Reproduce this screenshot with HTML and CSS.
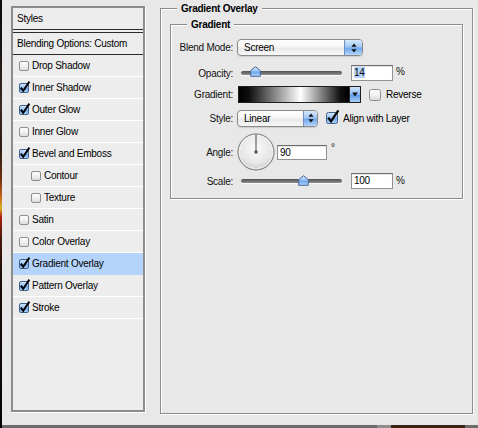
FILE: index.html
```html
<!DOCTYPE html>
<html>
<head>
<meta charset="utf-8">
<title>Layer Style</title>
<link rel="stylesheet" href="styles.css">
</head>
<body>
<svg class="defs" width="0" height="0" aria-hidden="true">
  <defs>
    <linearGradient id="gw" x1="0" y1="0" x2="0" y2="1">
      <stop offset="0" stop-color="#ffffff"/>
      <stop offset="0.5" stop-color="#f1f1f1"/>
      <stop offset="1" stop-color="#d9d9d9"/>
    </linearGradient>
    <linearGradient id="gb" x1="0" y1="0" x2="0" y2="1">
      <stop offset="0" stop-color="#d6e8fc"/>
      <stop offset="0.45" stop-color="#9cc4f3"/>
      <stop offset="0.55" stop-color="#6ea6ec"/>
      <stop offset="1" stop-color="#b3d6fa"/>
    </linearGradient>
    <radialGradient id="gd" cx="0.5" cy="0.4" r="0.6">
      <stop offset="0" stop-color="#fbfbfb"/>
      <stop offset="0.7" stop-color="#e6e6e6"/>
      <stop offset="1" stop-color="#c9c9c9"/>
    </radialGradient>
  </defs>
</svg>
<div class="window">
  <div class="main">
    <div class="edge"></div>

    <div class="styles-box">
      <div class="hdr">Styles</div>
      <div class="hdr hdr2">Blending Options: Custom</div>
      <ul class="list">
        <li class="item"><svg class="cb" width="10" height="10" viewBox="0 0 10 10"><rect x=".5" y=".5" width="9" height="9" rx="1.5" fill="url(#gw)" stroke="#8e8e8e"/></svg>Drop Shadow</li>
        <li class="item"><svg class="cb" width="10" height="10" viewBox="0 0 10 10" overflow="visible"><rect x=".5" y=".5" width="9" height="9" rx="1.5" fill="url(#gb)" stroke="#3f5f8c"/><path d="M1.8 4.6 L4.2 7.9 L10.4 -1.4" fill="none" stroke="#000" stroke-width="1.9"/></svg>Inner Shadow</li>
        <li class="item"><svg class="cb" width="10" height="10" viewBox="0 0 10 10" overflow="visible"><rect x=".5" y=".5" width="9" height="9" rx="1.5" fill="url(#gb)" stroke="#3f5f8c"/><path d="M1.8 4.6 L4.2 7.9 L10.4 -1.4" fill="none" stroke="#000" stroke-width="1.9"/></svg>Outer Glow</li>
        <li class="item"><svg class="cb" width="10" height="10" viewBox="0 0 10 10"><rect x=".5" y=".5" width="9" height="9" rx="1.5" fill="url(#gw)" stroke="#8e8e8e"/></svg>Inner Glow</li>
        <li class="item"><svg class="cb" width="10" height="10" viewBox="0 0 10 10" overflow="visible"><rect x=".5" y=".5" width="9" height="9" rx="1.5" fill="url(#gb)" stroke="#3f5f8c"/><path d="M1.8 4.6 L4.2 7.9 L10.4 -1.4" fill="none" stroke="#000" stroke-width="1.9"/></svg>Bevel and Emboss</li>
        <li class="item sub"><svg class="cb" width="10" height="10" viewBox="0 0 10 10"><rect x=".5" y=".5" width="9" height="9" rx="1.5" fill="url(#gw)" stroke="#8e8e8e"/></svg>Contour</li>
        <li class="item sub"><svg class="cb" width="10" height="10" viewBox="0 0 10 10"><rect x=".5" y=".5" width="9" height="9" rx="1.5" fill="url(#gw)" stroke="#8e8e8e"/></svg>Texture</li>
        <li class="item"><svg class="cb" width="10" height="10" viewBox="0 0 10 10"><rect x=".5" y=".5" width="9" height="9" rx="1.5" fill="url(#gw)" stroke="#8e8e8e"/></svg>Satin</li>
        <li class="item"><svg class="cb" width="10" height="10" viewBox="0 0 10 10"><rect x=".5" y=".5" width="9" height="9" rx="1.5" fill="url(#gw)" stroke="#8e8e8e"/></svg>Color Overlay</li>
        <li class="item selected"><svg class="cb" width="10" height="10" viewBox="0 0 10 10" overflow="visible"><rect x=".5" y=".5" width="9" height="9" rx="1.5" fill="url(#gb)" stroke="#3f5f8c"/><path d="M1.8 4.6 L4.2 7.9 L10.4 -1.4" fill="none" stroke="#000" stroke-width="1.9"/></svg>Gradient Overlay</li>
        <li class="item"><svg class="cb" width="10" height="10" viewBox="0 0 10 10" overflow="visible"><rect x=".5" y=".5" width="9" height="9" rx="1.5" fill="url(#gb)" stroke="#3f5f8c"/><path d="M1.8 4.6 L4.2 7.9 L10.4 -1.4" fill="none" stroke="#000" stroke-width="1.9"/></svg>Pattern Overlay</li>
        <li class="item"><svg class="cb" width="10" height="10" viewBox="0 0 10 10" overflow="visible"><rect x=".5" y=".5" width="9" height="9" rx="1.5" fill="url(#gb)" stroke="#3f5f8c"/><path d="M1.8 4.6 L4.2 7.9 L10.4 -1.4" fill="none" stroke="#000" stroke-width="1.9"/></svg>Stroke</li>
      </ul>
    </div>

    <div class="group outer">
      <div class="group-title">Gradient Overlay</div>
      <div class="group inner">
        <div class="group-title">Gradient</div>

        <div class="row r1">
          <span class="lbl">Blend Mode:</span>
          <div class="popup blend">
            <span class="val">Screen</span>
            <span class="arr"><svg width="6" height="10" viewBox="0 0 6 10"><path d="M3 0.5 L5.6 3.8 H0.4 Z M3 9.5 L5.6 6.2 H0.4 Z" fill="#111"/></svg></span>
          </div>
        </div>

        <div class="row r2">
          <span class="lbl">Opacity:</span>
          <div class="slider">
            <div class="track"></div>
            <svg class="thumb" style="left:14%" width="11" height="11" viewBox="0 0 11 11"><path d="M5.5 0.7 L10.3 4.6 V10.3 H0.7 V4.6 Z" fill="url(#gb)" stroke="#46679a"/></svg>
          </div>
          <span class="field"><span class="sel">14</span></span>
          <span class="unit">%</span>
        </div>

        <div class="row r3">
          <span class="lbl">Gradient:</span>
          <div class="grad">
            <span class="grad-bar"></span>
            <span class="grad-btn"><svg width="6" height="5" viewBox="0 0 6 5"><path d="M0.2 0.5 H5.8 L3 4.6 Z" fill="#111"/></svg></span>
          </div>
          <svg class="cbr" width="12" height="12" viewBox="0 0 12 12"><rect x=".5" y=".5" width="11" height="11" rx="2" fill="url(#gw)" stroke="#8e8e8e"/></svg>
          <span class="cbl">Reverse</span>
        </div>

        <div class="row r4">
          <span class="lbl">Style:</span>
          <div class="popup style">
            <span class="val">Linear</span>
            <span class="arr"><svg width="6" height="10" viewBox="0 0 6 10"><path d="M3 0.5 L5.6 3.8 H0.4 Z M3 9.5 L5.6 6.2 H0.4 Z" fill="#111"/></svg></span>
          </div>
          <svg class="cbr" width="12" height="12" viewBox="0 0 12 12" overflow="visible"><rect x=".5" y=".5" width="11" height="11" rx="2" fill="url(#gb)" stroke="#3f5f8c"/><path d="M2.2 5.6 L5 9.4 L12.4 -1.6" fill="none" stroke="#000" stroke-width="2.2"/></svg>
          <span class="cbl">Align with Layer</span>
        </div>

        <div class="row r5">
          <span class="lbl">Angle:</span>
          <svg class="dial" width="38" height="38" viewBox="0 0 38 38"><circle cx="19" cy="19" r="18" fill="url(#gd)" stroke="#7b7b7b"/><circle cx="19" cy="19" r="16.5" fill="none" stroke="#ffffff" stroke-opacity=".7"/><path d="M19 19 V1.5" stroke="#4a4a4a" stroke-width="1"/><rect x="17.5" y="17.5" width="3" height="3" fill="#555"/></svg>
          <span class="field angle">90</span>
          <span class="deg">°</span>
        </div>

        <div class="row r6">
          <span class="lbl">Scale:</span>
          <div class="slider">
            <div class="track"></div>
            <svg class="thumb" style="left:61%" width="11" height="11" viewBox="0 0 11 11"><path d="M5.5 0.7 L10.3 4.6 V10.3 H0.7 V4.6 Z" fill="url(#gb)" stroke="#46679a"/></svg>
          </div>
          <span class="field">100</span>
          <span class="unit">%</span>
        </div>
      </div>
    </div>
  </div>
  <div class="bottom">
    <span class="b0"></span><span class="b1"></span><span class="b2"></span><span class="b3"></span><span class="b4"></span>
  </div>
</div>
</body>
</html>
```

FILE: styles.css
```css
* { box-sizing: border-box; margin: 0; padding: 0; }

html, body { width: 478px; height: 428px; overflow: hidden; }

body {
  background: #e8e8e8;
  font-family: "Liberation Sans", Arial, sans-serif;
  font-size: 10px;
  letter-spacing: -0.25px;
  color: #111;
}

.defs { position: absolute; width: 0; height: 0; }

.window { display: flex; flex-direction: column; height: 428px; }

.main { display: flex; align-items: flex-start; height: 425px; }

.edge {
  flex: none;
  width: 2px;
  height: 425px;
  background: linear-gradient(#0a0a0a 0%, #1a1512 12%, #3a2a22 25%, #2a1a12 35%, #6a3010 42%, #c06018 46%, #d8b020 49%, #b02010 51%, #4a1808 56%, #1a0d08 65%, #050505 100%);
}

/* ---------- Styles list ---------- */
.styles-box {
  flex: none;
  margin: 6px 0 0 9px;
  width: 134px;
  height: 406px;
  border: 2px solid #8c8c8c;
  background: #ededed;
  box-shadow: 1px 1px 0 #fff;
}

.hdr {
  height: 22px;
  line-height: 21px;
  padding-left: 4px;
  border-bottom: 1px solid #2c2c2c;
  color: #000;
}

.hdr2 {
  height: 23px;
  margin-top: 2px;
  border-top: 1px solid #2c2c2c;
}

.list { list-style: none; }

.item {
  display: flex;
  align-items: center;
  gap: 3px;
  height: 22px;
  padding-left: 6px;
  border-bottom: 1px solid #fff;
  color: #000;
}

.item.sub { padding-left: 18px; }

.item.selected {
  background: #b5d4fc;
  border-bottom-color: #b5d4fc;
}

.cb { flex: none; display: block; }

/* ---------- Group boxes ---------- */
.group {
  border: 1px solid #8c8c8c;
  box-shadow: inset 1px 1px 0 #fff, 1px 1px 0 #fff;
}

.outer {
  flex: none;
  margin: 8px 0 0 15px;
  width: 313px;
  height: 406px;
}

.group-title {
  width: max-content;
  height: 13px;
  line-height: 13px;
  margin: -7px 0 0 16px;
  padding: 0 4px;
  background: #e8e8e8;
  font-weight: bold;
  color: #000;
}

.inner {
  margin: 9px 9px 0 9px;
  padding-bottom: 9px;
}

/* ---------- Rows ---------- */
.row { display: flex; align-items: center; }
.r1 { margin-top: 7px; height: 19px; }
.r2 { margin-top: 7px; height: 18px; }
.r3 { margin-top: 4px; height: 17px; }
.r4 { margin-top: 6px; height: 18px; }
.r5 { margin-top: 6px; height: 38px; }
.r6 { margin-top: 2px; height: 16px; }

.lbl {
  flex: none;
  width: 62px;
  margin-right: 4px;
  text-align: right;
}

/* pop-up menus */
.popup {
  display: flex;
  height: 17px;
  border: 1px solid #8a8a8a;
  border-radius: 4px;
  overflow: hidden;
  background: linear-gradient(#ffffff 0%, #f6f6f6 45%, #e9e9e9 55%, #f7f7f7 100%);
  box-shadow: 0 1px 1px rgba(0, 0, 0, 0.12);
}
.popup.blend { width: 126px; }
.popup.style { width: 81px; }

.popup .val {
  flex: 1;
  padding-left: 6px;
  line-height: 15px;
  color: #000;
}

.popup .arr {
  flex: none;
  display: flex;
  align-items: center;
  justify-content: center;
  border-left: 1px solid #6f8fbf;
  background: linear-gradient(#d6e8fc 0%, #a3c8f4 45%, #70a7ec 55%, #b5d7fa 100%);
}
.popup.blend .arr { width: 18px; }
.popup.style .arr { width: 14px; }

/* sliders */
.slider {
  flex: none;
  position: relative;
  display: flex;
  align-items: center;
  width: 101px;
  height: 18px;
  margin-left: 4px;
}
.r6 .slider { height: 16px; }

.track {
  width: 100%;
  height: 4px;
  border-radius: 2px;
  background: linear-gradient(#505050, #8e8e8e);
  box-shadow: 0 1px 0 #fbfbfb;
}

.thumb {
  position: absolute;
  top: 2px;
  margin-left: -5px;
}
.r6 .thumb { top: 2px; }

/* text fields */
.field {
  flex: none;
  display: block;
  width: 42px;
  height: 16px;
  margin-left: 9px;
  padding-left: 2px;
  line-height: 14px;
  border: 1px solid #929292;
  border-top-color: #6c6c6c;
  background: #fff;
  box-shadow: inset 0 1px 1px rgba(0, 0, 0, 0.12);
  color: #000;
}
.field .sel { background: #b5d5ff; }

.field.angle {
  width: 50px;
  height: 15px;
  line-height: 13px;
  margin-left: 2px;
}

.unit { margin-left: 3px; line-height: 12px; align-self: flex-start; margin-top: 2px; }

.deg {
  align-self: flex-start;
  margin-top: 9px;
  margin-left: 4px;
  line-height: 12px;
}

/* gradient picker */
.grad {
  flex: none;
  display: flex;
  height: 17px;
  margin-left: 1px;
  border: 1px solid #1e1e1e;
}
.grad-bar {
  width: 110px;
  background: linear-gradient(to right, #000 0%, #0e0e0e 9%, #fff 56%, #111 92%, #000 100%);
}
.grad-btn {
  width: 11px;
  display: flex;
  align-items: center;
  justify-content: center;
  border-left: 1px solid #2a2a2a;
  background: linear-gradient(#cfe3fb 0%, #92bdf1 45%, #5f9ae6 55%, #a8cff8 100%);
}

/* checkboxes in the right pane */
.cbr { flex: none; display: block; margin-left: 8px; }
.cbl { margin-left: 5px; color: #000; }

.dial { flex: none; display: block; }

/* ---------- bottom edge ---------- */
.bottom { display: flex; height: 3px; }
.b0 { width: 2px; background: #000; }
.b1 { width: 375px; background: #6c6c6c; }
.b2 { width: 14px; background: #8d8d8d; }
.b3 { width: 74px; background: #3b2415; }
.b4 { flex: 1; background: #6c6c6c; }
```
